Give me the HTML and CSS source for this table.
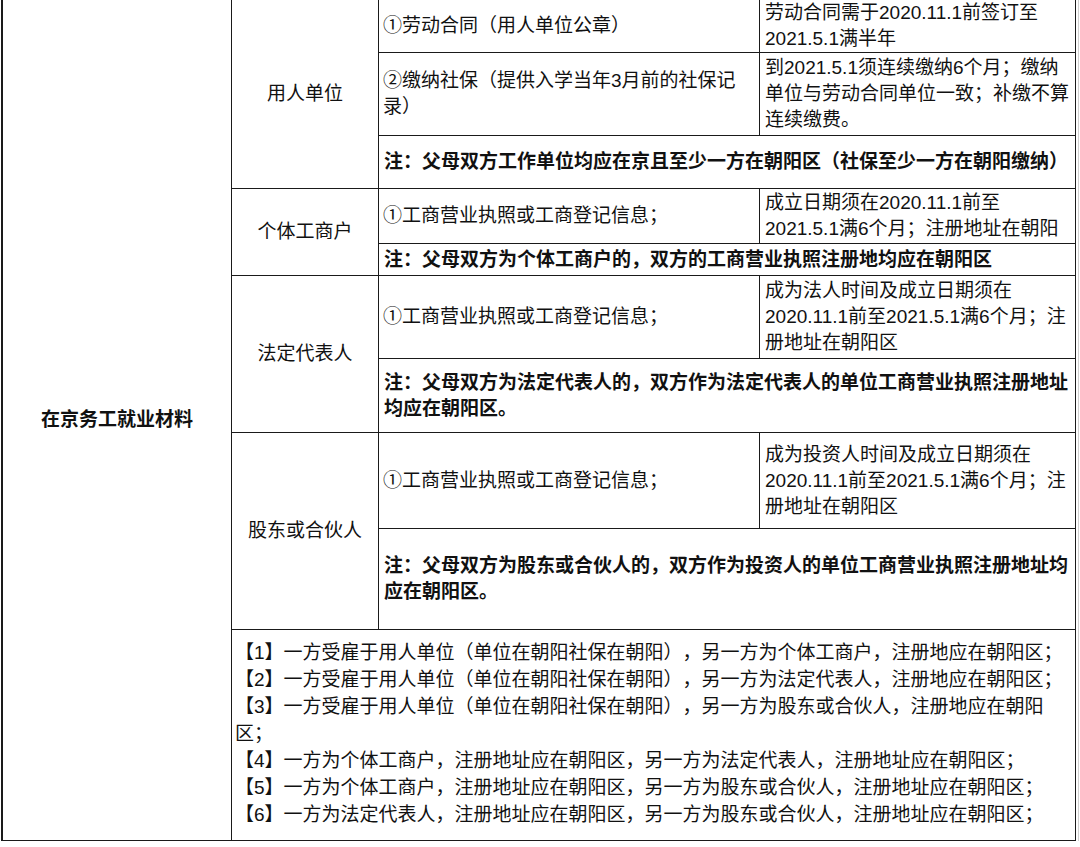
FILE: index.html
```html
<!DOCTYPE html>
<html lang="zh-CN">
<head>
<meta charset="utf-8">
<title>在京务工就业材料</title>
<link rel="stylesheet" href="styles.css">
</head>
<body>
<div class="page">
  <div class="sheet">
    <div class="cell cat">在京务工就业材料</div>

    <div class="cell type r3">用人单位</div>
    <div class="cell doc h1">①劳动合同（用人单位公章）</div>
    <div class="cell req">劳动合同需于2020.11.1前签订至2021.5.1满半年</div>
    <div class="cell doc h2">②缴纳社保（提供入学当年3月前的社保记录）</div>
    <div class="cell req">到2021.5.1须连续缴纳6个月；缴纳单位与劳动合同单位一致；补缴不算连续缴费。</div>
    <div class="cell note h3">注：父母双方工作单位均应在京且至少一方在朝阳区（社保至少一方在朝阳缴纳）</div>

    <div class="cell type r2">个体工商户</div>
    <div class="cell doc h4">①工商营业执照或工商登记信息；</div>
    <div class="cell req">成立日期须在2020.11.1前至2021.5.1满6个月；注册地址在朝阳</div>
    <div class="cell note h5">注：父母双方为个体工商户的，双方的工商营业执照注册地均应在朝阳区</div>

    <div class="cell type r2">法定代表人</div>
    <div class="cell doc h6">①工商营业执照或工商登记信息；</div>
    <div class="cell req">成为法人时间及成立日期须在2020.11.1前至2021.5.1满6个月；注册地址在朝阳区</div>
    <div class="cell note h7">注：父母双方为法定代表人的，双方作为法定代表人的单位工商营业执照注册地址均应在朝阳区。</div>

    <div class="cell type r2">股东或合伙人</div>
    <div class="cell doc h8">①工商营业执照或工商登记信息；</div>
    <div class="cell req">成为投资人时间及成立日期须在2020.11.1前至2021.5.1满6个月；注册地址在朝阳区</div>
    <div class="cell note h9">注：父母双方为股东或合伙人的，双方作为投资人的单位工商营业执照注册地址均应在朝阳区。</div>

    <div class="cell combos h10">
      <p>【1】一方受雇于用人单位（单位在朝阳社保在朝阳），另一方为个体工商户，注册地应在朝阳区；</p>
      <p>【2】一方受雇于用人单位（单位在朝阳社保在朝阳），另一方为法定代表人，注册地应在朝阳区；</p>
      <p>【3】一方受雇于用人单位（单位在朝阳社保在朝阳），另一方为股东或合伙人，注册地应在朝阳区；</p>
      <p>【4】一方为个体工商户，注册地址应在朝阳区，另一方为法定代表人，注册地址应在朝阳区；</p>
      <p>【5】一方为个体工商户，注册地址应在朝阳区，另一方为股东或合伙人，注册地址应在朝阳区；</p>
      <p>【6】一方为法定代表人，注册地址应在朝阳区，另一方为股东或合伙人，注册地址应在朝阳区；</p>
    </div>
  </div>
  <div class="gutter"></div>
</div>
</body>
</html>
```

FILE: styles.css
```css
html, body {
  margin: 0;
  padding: 0;
  background: #ffffff;
}

body {
  font-family: "Liberation Sans", "Noto Sans CJK SC", sans-serif;
  font-size: 19px;
  line-height: 26px;
  color: #111111;
  text-spacing-trim: space-all;
}

.page {
  display: flex;
  align-items: flex-start;
  padding-left: 1px;
}

.sheet {
  display: grid;
  grid-template-columns: 229px 147px 381px 316px;
  grid-template-rows: 53px 83px 53px 55px 32px 83px 74px 96px 101px 211px;
  border-left: 2px solid #1a1a1a;
}

.gutter {
  box-sizing: border-box;
  width: 3px;
  height: 841px;
  border-right: 1px solid #cfcfcf;
}

.cell {
  box-sizing: border-box;
  border-right: 1px solid #1a1a1a;
  border-bottom: 1px solid #1a1a1a;
  display: flex;
  align-items: center;
  min-width: 0;
}

.cat {
  grid-row: span 10;
  justify-content: center;
  font-weight: 700;
}

.type {
  justify-content: center;
  text-align: center;
}

.r3 { grid-row: span 3; }
.r2 { grid-row: span 2; }

.doc,
.req {
  padding: 0 4px 0 4px;
}

.req {
  padding-left: 5px;
}

.note {
  grid-column: span 2;
  padding: 0 4px 0 5px;
  font-weight: 700;
}

.combos {
  grid-column: span 3;
  display: block;
  padding: 9px 3px 0 3px;
  line-height: 27px;
}

.combos p {
  margin: 0;
}
```
